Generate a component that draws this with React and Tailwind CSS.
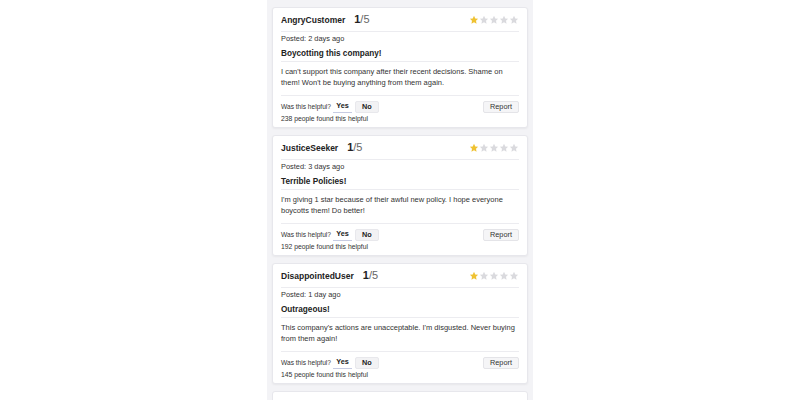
import React from 'react';

const reviews = [
  {
    user: 'AngryCustomer',
    posted: '2 days ago',
    title: 'Boycotting this company!',
    body: "I can't support this company after their recent decisions. Shame on them! Won't be buying anything from them again.",
    helpful: 238,
  },
  {
    user: 'JusticeSeeker',
    posted: '3 days ago',
    title: 'Terrible Policies!',
    body: "I'm giving 1 star because of their awful new policy. I hope everyone boycotts them! Do better!",
    helpful: 192,
  },
  {
    user: 'DisappointedUser',
    posted: '1 day ago',
    title: 'Outrageous!',
    body: "This company's actions are unacceptable. I'm disgusted. Never buying from them again!",
    helpful: 145,
  },
];

const Star = ({ filled }) => (
  <svg viewBox="0 0 24 24" className="w-[10px] h-[10px]">
    <path
      d="M12 2l3 6.3 6.8.9-5 4.8 1.3 6.8L12 17.5l-6.1 3.3 1.3-6.8-5-4.8 6.8-.9z"
      fill={filled ? '#efc232' : '#dadade'}
    />
  </svg>
);

const ReviewCard = ({ review }) => (
  <div className="bg-white rounded-[3px] border border-[#e7e7ec] shadow-[0_1px_2px_rgba(0,0,0,0.05)] px-[8px]">
    {/* Header */}
    <div className="h-[24px] flex items-center justify-between border-b border-[#ececf0]">
      <div className="flex items-baseline">
        <span className="text-[8.5px] font-bold text-[#222]">{review.user}</span>
        <span className="ml-[9px] text-[11px] text-[#222] font-bold">
          1<span className="font-normal text-[#666]">/5</span>
        </span>
      </div>
      <div className="flex">
        {[0, 1, 2, 3, 4].map((i) => (
          <Star key={i} filled={i === 0} />
        ))}
      </div>
    </div>

    {/* Posted + title */}
    <div className="border-b border-[#ececf0] pb-[1px]">
      <div className="mt-[2px] text-[7.4px] leading-[10px] text-[#333]">Posted: {review.posted}</div>
      <div className="mt-[4px] text-[8.2px] leading-[12px] font-bold text-[#222]">{review.title}</div>
    </div>

    {/* Body */}
    <div className="border-b border-[#ececf0] pt-[5px] pb-[7px] text-[7.5px] leading-[10.5px] text-[#333]">
      {review.body}
    </div>

    {/* Footer */}
    <div className="pt-[5px] pb-[4px]">
      <div className="h-[12px] flex items-center justify-between">
        <div className="flex items-center text-[6.6px] text-[#333]">
          <span>Was this helpful?</span>
          <button className="ml-[2px] h-[12px] w-[19px] text-[7.3px] font-semibold text-[#222] bg-white border-b border-[#c6cbe2]">
            Yes
          </button>
          <button className="ml-[3px] h-[12px] w-[24px] text-[7.3px] font-semibold text-[#222] bg-[#f2f2f4] rounded-[2px] border border-[#e8e8ec]">
            No
          </button>
        </div>
        <button className="h-[12px] w-[36px] text-[7.3px] text-[#333] bg-[#f5f5f7] rounded-[2px] border border-[#e4e4e8]">
          Report
        </button>
      </div>
      <div className="text-[6.8px] leading-[9px] text-[#333] mt-[1px]">{review.helpful} people found this helpful</div>
    </div>
  </div>
);

export default function App() {
  return (
    <div
      className="w-[800px] h-[400px] overflow-hidden bg-white flex justify-center"
      style={{ fontFamily: '"Liberation Sans", Arial, sans-serif' }}
    >
      <div className="w-[266px] bg-[#f3f3f6] px-[5px] pt-[7px] flex flex-col gap-[7px]">
        {reviews.map((r) => (
          <ReviewCard key={r.user} review={r} />
        ))}
        <div className="h-[30px] shrink-0 bg-white rounded-[3px] border border-[#e7e7ec]" />
      </div>
    </div>
  );
}
